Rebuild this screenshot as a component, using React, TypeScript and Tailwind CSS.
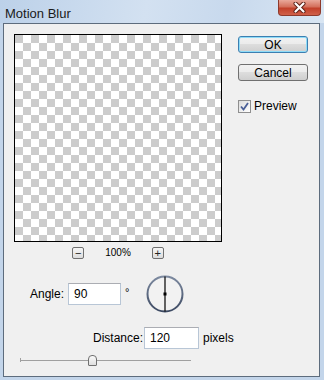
import React from 'react';

const winBtn =
  'flex items-center justify-center rounded-[3px] border bg-[linear-gradient(#f2f2f2,#ebebeb_50%,#dddddd_50%,#cfcfcf)] text-[12px] text-black';

function SmallBtn({ glyph }: { glyph: string }) {
  return (
    <div className="flex h-[12px] w-[12px] items-center justify-center rounded-[2px] border border-[#707070] bg-[linear-gradient(#f6f6f6,#dcdcdc)] text-[11px] leading-none text-[#222]">
      {glyph}
    </div>
  );
}

function AngleDial() {
  return (
    <svg width="38" height="38" viewBox="0 0 38 38">
      <defs>
        <linearGradient id="rim" x1="0" y1="0" x2="0" y2="1">
          <stop offset="0" stopColor="#7d8aa0" />
          <stop offset="1" stopColor="#3d4a63" />
        </linearGradient>
      </defs>
      <circle cx="19" cy="19" r="17.5" fill="#f2f2f2" stroke="url(#rim)" strokeWidth="2" />
      <line x1="19" y1="1.5" x2="19" y2="36.5" stroke="#000" strokeWidth="1.2" />
      <rect x="17.5" y="17.5" width="3" height="3" fill="#000" />
    </svg>
  );
}

export default function App() {
  return (
    <div
      className="flex h-[380px] w-[324px] flex-col overflow-hidden bg-[#c3d5ea]"
      style={{ fontFamily: '"Liberation Sans", Arial, sans-serif' }}
    >
      {/* Title bar */}
      <div className="flex h-[23px] shrink-0 items-start justify-between bg-[linear-gradient(100deg,#bcd1e9,#d3e1f1_45%,#c8d9ed_70%,#d9e6f3)]">
        <span className="pl-[5px] pt-[4px] text-[13px] font-normal text-[#1a1a1a]">Motion Blur</span>
        <div className="mr-[3px] flex h-[16px] w-[43px] items-center justify-center rounded-b-[4px] border border-t-0 border-[#8e3a2c] bg-[linear-gradient(#e9a89a,#d4705c_45%,#c2402a_55%,#d0614a)]">
          <svg width="15" height="11" viewBox="0 0 15 11">
            <path d="M3.5 1.5 L11.5 9.5 M11.5 1.5 L3.5 9.5" stroke="#5a1e14" strokeWidth="4" strokeLinecap="round" />
            <path d="M3.5 1.5 L11.5 9.5 M11.5 1.5 L3.5 9.5" stroke="#ffffff" strokeWidth="2.2" strokeLinecap="round" />
          </svg>
        </div>
      </div>

      {/* Client area */}
      <div className="mb-[3px] ml-[3px] mr-[4px] flex flex-1 flex-col border border-[#5d6c7d] bg-[#f0f0f0]">
        <div className="flex pl-[10px] pt-[10px]">
          {/* Preview column */}
          <div className="flex w-[208px] flex-col">
            <div className="h-[208px] w-[208px] border border-black bg-[conic-gradient(#ffffff_25%,#cccccc_0_50%,#ffffff_0_75%,#cccccc_0)] bg-[length:16px_16px]" />
            <div className="mt-[5px] flex items-center justify-center gap-[21px]">
              <SmallBtn glyph="−" />
              <span className="text-[10px] leading-[12px] text-black">100%</span>
              <SmallBtn glyph="+" />
            </div>
          </div>

          {/* Buttons column */}
          <div className="ml-[16px] mt-[2px] flex w-[70px] flex-col">
            <div className={`${winBtn} h-[17px] border-[#3c7fb1] shadow-[inset_0_0_0_1px_#8fdcf8]`}>OK</div>
            <div className={`${winBtn} mt-[11px] h-[17px] border-[#707070]`}>Cancel</div>
            <div className="mt-[16px] flex items-center gap-[3px]">
              <div className="flex h-[13px] w-[13px] items-center justify-center border border-[#8f8f8f] bg-[linear-gradient(135deg,#dcdcdc,#ffffff)]">
                <svg width="9" height="9" viewBox="0 0 9 9">
                  <path d="M1 4.5 L3.5 7.5 L8 1" fill="none" stroke="#4a5f97" strokeWidth="1.8" />
                </svg>
              </div>
              <span className="text-[12px] text-black">Preview</span>
            </div>
          </div>
        </div>

        {/* Angle row */}
        <div className="mt-[16px] flex h-[38px] items-center">
          <span className="w-[60px] text-right text-[12px] text-black">Angle:</span>
          <div className="ml-[4px] flex h-[22px] w-[53px] items-center border border-[#b8c6d6] border-t-[#abadb3] bg-white pl-[5px] text-[12px] text-black">
            90
          </div>
          <span className="ml-[4px] self-start pt-[9px] text-[11px] text-black">°</span>
          <div className="ml-[17px]">
            <AngleDial />
          </div>
        </div>

        {/* Distance row */}
        <div className="mt-[14px] flex h-[22px] items-center">
          <span className="w-[139px] text-right text-[12px] text-black">Distance:</span>
          <div className="ml-[1px] flex h-[22px] w-[55px] items-center border border-[#b8c6d6] border-t-[#abadb3] bg-white pl-[5px] text-[12px] text-black">
            120
          </div>
          <span className="ml-[4px] text-[12px] text-black">pixels</span>
        </div>

        {/* Slider */}
        <div className="relative ml-[16px] mt-[6px] h-[12px] w-[171px]">
          <div className="absolute left-0 right-0 top-[5px] h-[2px] border-t border-[#a0a0a0] border-b-white" />
          <div className="absolute left-0 top-[3px] h-[4px] w-[1px] bg-[#a0a0a0]" />
          <div className="absolute left-[68px] top-0 h-[11px] w-[9px] rounded-t-[4px] rounded-b-[1px] border border-[#707070] bg-[linear-gradient(#fbfbfb,#dedede)]" />
        </div>
      </div>
    </div>
  );
}
